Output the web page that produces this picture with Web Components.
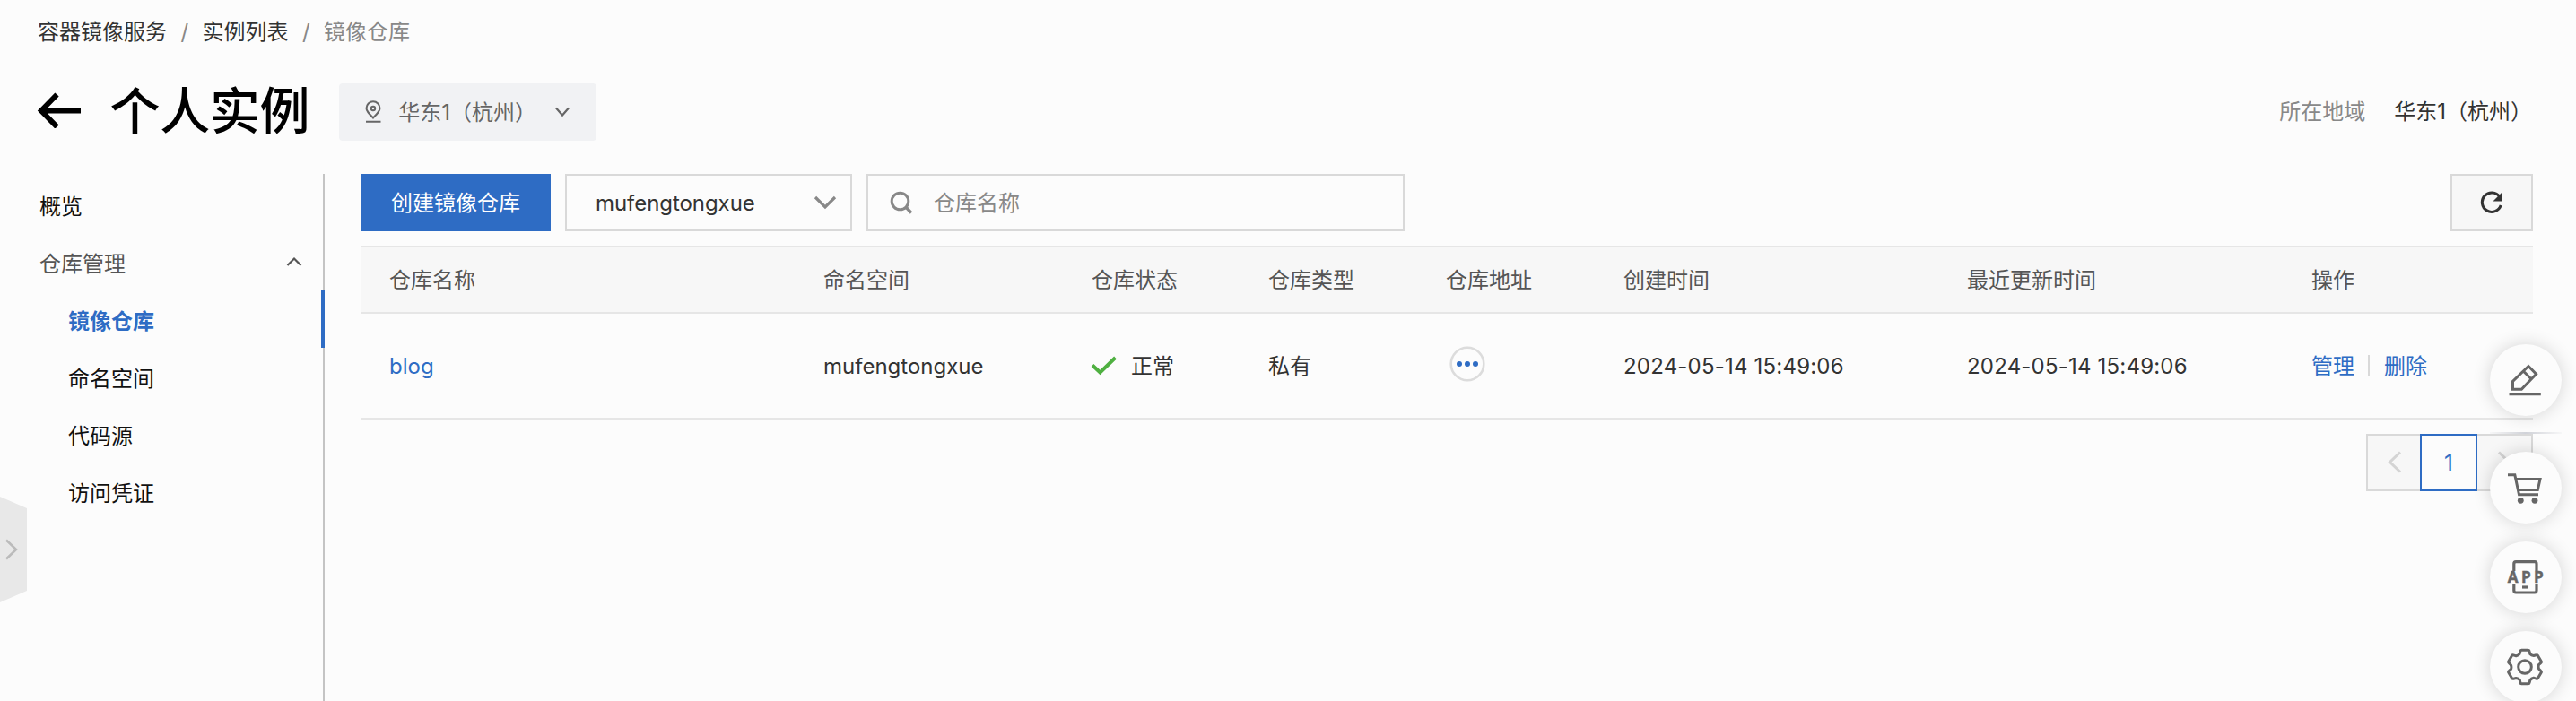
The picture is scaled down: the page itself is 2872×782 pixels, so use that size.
<!DOCTYPE html>
<html lang="zh-CN">
<head>
<meta charset="utf-8">
<title>镜像仓库</title>
<style>
html,body{margin:0;height:100%;overflow:hidden;background:#fcfcfc}
body{font:24px/36px Inter,"Noto Sans CJK SC",sans-serif;color:#333}
</style>
</head>
<body>
<registry-page></registry-page>
<script>
const define=(name,html)=>customElements.define(name,class extends HTMLElement{
  constructor(){
    super();
    const t=document.createElement('template');
    t.innerHTML=html;
    this.attachShadow({mode:'open'}).append(t.content.cloneNode(true));
  }
});

/* six-toothed gear outline around the centre (cx, cy) */
const gear=(cx,cy)=>{
  let d='';
  for(let k=0;k<6;k++){
    const a=k*Math.PI/3,c=1.02*Math.cos(a),s=1.02*Math.sin(a);
    const p=(x,y)=>(cx+x*c-y*s).toFixed(2)+' '+(cy+x*s+y*c).toFixed(2);
    d+=(k?'L':'M')+p(-5,-17.2)+'Q'+p(-4.8,-18.4)+' '+p(-3.6,-18.5)+'L'+p(3.6,-18.5)+'Q'+p(4.8,-18.4)+' '+p(5,-17.2)+'L'+p(5.6,-14.2)+'Q'+p(7.2,-12.4)+' '+p(9.6,-12.2);
  }
  return d+'Z';
};
const icons={
  back:[50,40,'<path d="M49 20.5H6M22.500 2.500L5 20.500L22.500 38.500" stroke-width="6"/>'],
  pin:[20,26,'<path d="M10 19.500C5 14.500 2.500 12 2.500 8.800A7.500 7.500 0 0 1 17.500 8.800C17.500 12 15 14.500 10 19.500ZM2 23.700H18.500" stroke-width="2"/><circle cx="10" cy="9" r="2.200" stroke-width="2"/>'],
  down:[18,12,'<path d="M2 1.500L9 9.500L16 1.500" stroke-width="2.200"/>'],
  up:[18,12,'<path d="M1.500 10L9 2.500L16.500 10" stroke-width="2.200"/>'],
  select:[26,16,'<path d="M2 2L13 13L24 2" stroke-width="3.200"/>'],
  search:[26,26,'<circle cx="11.500" cy="11.500" r="9.300" stroke-width="3"/><path d="M18 18L24 24.500" stroke-width="3.400"/>'],
  refresh:[26,26,'<path d="M21.800 6.500A10.700 10.700 0 1 0 23.200 16" stroke-width="3"/><path d="M25 1V11.500H14.500Z" fill="currentColor" stroke="none"/>'],
  check:[30,22,'<path d="M2 10.500L10.500 18.500L27.500 2" stroke-width="4"/>'],
  more:[40,40,'<circle cx="20" cy="20" r="18.300" stroke="#dcdcdc" stroke-width="2.600"/><g fill="#2e6cc4" stroke="none"><circle cx="11" cy="20" r="3"/><circle cx="20" cy="20" r="3"/><circle cx="29" cy="20" r="3"/></g>'],
  prev:[16,26,'<path d="M14 1.500L2.500 12.500L14 23.500" stroke-width="3"/>'],
  next:[16,26,'<path d="M2 1.500L13.500 12.500L2 23.500" stroke-width="3"/>'],
  expand:[14,24,'<path d="M1 1.500L12 12L1 22.500" stroke-width="2.600"/>'],
  edit:[80,80,'<path d="M43 24.500L51.600 33.300L35.300 50.300H25.500V41.500ZM37.300 30L46.300 39" stroke-width="3"/><path d="M21.500 55.700H56.800" stroke-width="3.200"/>'],
  cart:[80,80,'<path d="M20 25.700H27.800L32.500 47.700H54M29.500 30.500H56L53.300 42.500H31.500" stroke-width="3"/><g fill="currentColor" stroke="none"><circle cx="34.300" cy="54.300" r="3.400"/><circle cx="50" cy="54.300" r="3.400"/></g>'],
  app:[80,80,'<path d="M26.800 33V25Q26.800 22.700 29 22.700H50Q52 22.700 52 25V33M26.800 48V54.500Q26.800 57 29 57H50Q52 57 52 54.500V48" stroke-width="3.200"/><path d="M36 51H42.700" stroke-width="3.200"/><text x="19.700" y="46.200" fill="currentColor" stroke-width=".5" font-family="Open Sans,sans-serif" font-weight="700" font-size="17" textLength="40">APP</text>'],
  gear:[80,80,'<path d="'+gear(39,40)+'" stroke-width="3" stroke-linejoin="round"/><circle cx="39" cy="40" r="7.300" stroke-width="3"/>']
};
customElements.define('ui-icon',class extends HTMLElement{
  constructor(){super();this.attachShadow({mode:'open'})}
  connectedCallback(){
    const [w,h,body]=icons[this.getAttribute('name')];
    this.shadowRoot.innerHTML=`<style>:host{display:block;flex:none}svg{display:block}</style><svg width="${w}" height="${h}" viewBox="0 0 ${w} ${h}" fill="none" stroke="currentColor">${body}</svg>`;
  }
});

define('bread-crumb',`<style>
:host{display:flex;box-sizing:border-box;height:68px;padding:3px 0 0 42px;align-items:center;color:#333}
i{font-style:normal;width:39.500px;text-align:center;color:#888}
.last{color:#888}
</style><span>容器镜像服务</span><i>/</i><span>实例列表</span><i>/</i><span class="last">镜像仓库</span>`);

define('region-picker',`<style>
:host{display:flex;box-sizing:border-box;width:287px;height:64px;border-radius:4px;background:#f1f2f4;align-items:center;padding:0 29px 0 28px;color:#666}
.t{margin:2px 0 0 18px;flex:1;white-space:nowrap}
</style><ui-icon name="pin"></ui-icon><span class="t"><slot></slot></span><ui-icon name="down"></ui-icon>`);

define('page-header',`<style>
:host{display:flex;height:114px;align-items:center;padding:0 49px 0 41px}
ui-icon{color:#000;position:relative;top:-2px}
h1{margin:-3px 33px 0 31.500px;font-size:56px;line-height:80px;font-weight:500;letter-spacing:-.3px;color:#000}
.r{margin-left:auto;color:#888;display:flex;gap:32px}
b{font-weight:400;color:#333}
</style><ui-icon name="back"></ui-icon><h1>个人实例</h1><region-picker>华东1（杭州）</region-picker>
<div class="r"><span>所在地域</span><b>华东1（杭州）</b></div>`);

define('nav-item',`<style>
:host{display:flex;box-sizing:border-box;height:64px;padding:6px 23px 0 44px;align-items:center;justify-content:space-between;color:#111}
:host([sub]){padding-left:76px}
:host([group]){color:#555}
:host([active]){color:#2e6cc4;font-weight:600;border-right:4px solid #2e6cc4;margin-right:-2px}
::slotted(ui-icon){margin-top:-6px}
</style><slot></slot><slot name="icon"></slot>`);

define('side-nav',`<style>
:host{display:block;box-sizing:border-box;width:362px;border-right:2px solid #c4c4c4;padding-top:2px;flex:none}
</style>
<nav-item>概览</nav-item>
<nav-item group>仓库管理<ui-icon slot="icon" name="up"></ui-icon></nav-item>
<nav-item sub active>镜像仓库</nav-item><nav-item sub>命名空间</nav-item>
<nav-item sub>代码源</nav-item><nav-item sub>访问凭证</nav-item>`);

define('tool-bar',`<style>
:host{display:flex;height:64px;gap:16px}
div{box-sizing:border-box;height:64px;display:flex;align-items:center}
.new{width:212px;padding-top:2px;justify-content:center;background:#2e6cc4;color:#fff}
.sel{width:320px;border:2px solid #d9d9d9;padding:0 15px 0 32px;justify-content:space-between;letter-spacing:-.06px}
span{margin-top:2px}
.sel ui-icon,.q ui-icon{color:#888}
.q{width:600px;border:2px solid #d9d9d9;padding-left:24px;gap:23px;color:#888}
.re{width:92px;border:2px solid #d9d9d9;background:#f7f7f7;margin-left:auto;justify-content:center}
</style><div class="new">创建镜像仓库</div><div class="sel"><span>mufengtongxue</span><ui-icon name="select"></ui-icon></div>
<div class="q"><ui-icon name="search"></ui-icon><span>仓库名称</span></div><div class="re"><ui-icon name="refresh"></ui-icon></div>`);

define('repo-table',`<style>
:host{display:block;margin-top:16px}
.row{display:grid;grid-template-columns:484px 299px 197px 198px 198px 383px 384px 1fr;align-items:center;box-sizing:border-box;border-bottom:2px solid #e6e6e6;height:118px;padding-top:2px}
.head{height:76px;border-top:2px solid #e6e6e6;background:#f7f7f7;color:#555}
.row>*{padding-left:32px}
a{color:#2e6cc4}
.d{letter-spacing:.2px}
.st,.ops{display:flex;align-items:center}
.st ui-icon{color:#4fb041;margin:-3px 15px 0 -1px}
.ops i{width:2px;height:24px;background:#d9d9d9;margin:-3px 16px 0 15px}
.more{position:relative;top:-3.500px;padding-left:36px}
</style>
<div class="row head"><span>仓库名称</span><span>命名空间</span><span>仓库状态</span><span>仓库类型</span><span>仓库地址</span><span>创建时间</span><span>最近更新时间</span><span>操作</span></div>
<div class="row"><a>blog</a><span>mufengtongxue</span><span class="st"><ui-icon name="check"></ui-icon>正常</span><span>私有</span><ui-icon class="more" name="more"></ui-icon><span class="d">2024-05-14 15:49:06</span><span class="d">2024-05-14 15:49:06</span><span class="ops"><a>管理</a><i></i><a>删除</a></span></div>`);

define('page-nav',`<style>
:host{display:flex;justify-content:flex-end;margin-top:16px;color:#d4d4d4}
div{box-sizing:border-box;width:62px;height:64px;border:2px solid #d9d9d9;background:#f7f7f7;display:flex;align-items:center;justify-content:center}
.p{border-right:0;width:60px;padding-left:2px}.n{border-left:0}
.c{width:64px;border-color:#2e6cc4;background:#fcfcfc;color:#2e6cc4;padding-top:2px}
</style><div class="p"><ui-icon name="prev"></ui-icon></div><div class="c">1</div><div class="n"><ui-icon name="next"></ui-icon></div>`);

define('float-tools',`<style>
:host{position:absolute;left:2776px;top:384px;width:80px}
div{width:80px;height:80px;border-radius:50%;background:#fcfcfc;box-shadow:0 0 20px rgba(0,0,0,.16);color:#666;margin-bottom:20px}
hr{border:0;margin:18px 0 20px;height:2px;background:linear-gradient(90deg,rgba(200,202,208,.1),#d0d2d8 50%,rgba(200,202,208,.1))}
.first{margin-bottom:0}
</style><div class="first"><ui-icon name="edit"></ui-icon></div><hr><div><ui-icon name="cart"></ui-icon></div><div><ui-icon name="app"></ui-icon></div><div><ui-icon name="gear"></ui-icon></div>`);

define('drawer-tab',`<style>
:host{position:absolute;left:0;top:554px;width:30px;height:118px;background:#e8e8e8;clip-path:polygon(0 0,100% 13px,100% 105px,0 100%);display:flex;align-items:center;color:#bbb}
ui-icon{margin-left:6px}
</style><ui-icon name="expand"></ui-icon>`);

define('water-mark',`<style>
:host{position:absolute;inset:0;pointer-events:none;overflow:hidden;color:rgba(0,0,0,.014)}
span{position:absolute;top:298px;line-height:30px;font-size:24.200px;white-space:nowrap;transform-origin:0 100%;transform:rotate(-20deg)}
</style>${[-62,740,1542,2344].map(x=>`<span style="left:${x}px">jingaofeng@E7AD65CE 2024-05-14 15:52:14</span>`).join('')}`);

define('registry-page',`<style>
:host{display:flex;flex-direction:column;position:relative;height:782px;overflow:hidden}
.body{display:flex;flex:1;margin-top:12px}
main{flex:1;padding:0 48px 0 40px}
</style><bread-crumb></bread-crumb><page-header></page-header>
<div class="body"><side-nav></side-nav><main><tool-bar></tool-bar><repo-table></repo-table><page-nav></page-nav></main></div>
<water-mark></water-mark><drawer-tab></drawer-tab><float-tools></float-tools>`);
</script>
</body>
</html>
